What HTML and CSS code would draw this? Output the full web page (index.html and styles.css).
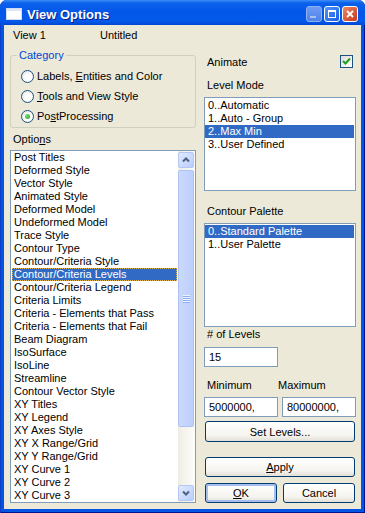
FILE: index.html
```html
<!DOCTYPE html>
<html lang="en">
<head>
    <meta charset="UTF-8">
    <meta name="viewport" content="width=device-width, initial-scale=1.0">
    <title>View Options</title>
    <link rel="stylesheet" href="styles.css">
</head>
<body>
<div class="window">
    <div class="titlebar">
        <svg class="app-icon" width="16" height="12" viewBox="0 0 16 12">
            <rect x="0.5" y="0.5" width="15" height="11" fill="#fff" stroke="#cfdcf5"/>
            <rect x="1" y="1" width="14" height="2" fill="#dfe7f7"/>
        </svg>
        <span class="title">View Options</span>
        <div class="caption-buttons">
            <span class="cap-btn cap-min">
                <svg width="14" height="14" viewBox="0 0 14 14"><rect x="3" y="9" width="6" height="2" fill="#a9c2f2"/></svg>
            </span>
            <span class="cap-btn cap-max">
                <svg width="14" height="14" viewBox="0 0 14 14"><rect x="3.5" y="3.5" width="7" height="7" fill="none" stroke="#fff"/><rect x="3" y="3" width="8" height="2" fill="#fff"/></svg>
            </span>
            <span class="cap-btn cap-close">
                <svg width="14" height="14" viewBox="0 0 14 14"><path d="M4 4 L10 10 M10 4 L4 10" stroke="#fff" stroke-width="1.8"/></svg>
            </span>
        </div>
    </div>

    <div class="client">
        <div class="view-row">
            <span class="view-name">View 1</span>
            <span>Untitled</span>
        </div>

        <div class="columns">
            <div class="left-col">
                <fieldset class="group">
                    <legend>Category</legend>
                    <div class="radio-row"><span class="radio"></span><span>Labels, <u>E</u>ntities and Color</span></div>
                    <div class="radio-row"><span class="radio"></span><span><u>T</u>ools and View Style</span></div>
                    <div class="radio-row"><span class="radio checked"></span><span>Po<u>s</u>tProcessing</span></div>
                </fieldset>

                <div class="label options-label">Optio<u>n</u>s</div>
                <div class="listbox options-list">
                    <ul class="items">
                        <li>Post Titles</li>
                        <li>Deformed Style</li>
                        <li>Vector Style</li>
                        <li>Animated Style</li>
                        <li>Deformed Model</li>
                        <li>Undeformed Model</li>
                        <li>Trace Style</li>
                        <li>Contour Type</li>
                        <li>Contour/Criteria Style</li>
                        <li class="selected">Contour/Criteria Levels</li>
                        <li>Contour/Criteria Legend</li>
                        <li>Criteria Limits</li>
                        <li>Criteria - Elements that Pass</li>
                        <li>Criteria - Elements that Fail</li>
                        <li>Beam Diagram</li>
                        <li>IsoSurface</li>
                        <li>IsoLine</li>
                        <li>Streamline</li>
                        <li>Contour Vector Style</li>
                        <li>XY Titles</li>
                        <li>XY Legend</li>
                        <li>XY Axes Style</li>
                        <li>XY X Range/Grid</li>
                        <li>XY Y Range/Grid</li>
                        <li>XY Curve 1</li>
                        <li>XY Curve 2</li>
                        <li>XY Curve 3</li>
                    </ul>
                    <div class="scrollbar">
                        <div class="scroll-btn">
                            <svg width="14" height="14" viewBox="0 0 14 14"><polyline points="4,8.5 7,5.5 10,8.5" fill="none" stroke="#4d6185" stroke-width="2"/></svg>
                        </div>
                        <div class="scroll-thumb">
                            <svg width="7" height="8" viewBox="0 0 7 8">
                                <rect x="0" y="0" width="7" height="1" fill="#eef4fe"/><rect x="0" y="1" width="7" height="1" fill="#8fb0ee"/>
                                <rect x="0" y="2" width="7" height="1" fill="#eef4fe"/><rect x="0" y="3" width="7" height="1" fill="#8fb0ee"/>
                                <rect x="0" y="4" width="7" height="1" fill="#eef4fe"/><rect x="0" y="5" width="7" height="1" fill="#8fb0ee"/>
                                <rect x="0" y="6" width="7" height="1" fill="#eef4fe"/><rect x="0" y="7" width="7" height="1" fill="#8fb0ee"/>
                            </svg>
                        </div>
                        <div class="scroll-track"></div>
                        <div class="scroll-btn">
                            <svg width="14" height="14" viewBox="0 0 14 14"><polyline points="4,5.5 7,8.5 10,5.5" fill="none" stroke="#4d6185" stroke-width="2"/></svg>
                        </div>
                    </div>
                </div>
            </div>

            <div class="right-col">
                <div class="animate-row">
                    <span>Animate</span>
                    <span class="checkbox">
                        <svg width="11" height="11" viewBox="0 0 11 11"><polyline points="2,5 4.5,7.5 9,2.5" fill="none" stroke="#21a121" stroke-width="2"/></svg>
                    </span>
                </div>

                <div class="label level-label">Level Mode</div>
                <div class="listbox level-list">
                    <ul class="items">
                        <li>0..Automatic</li>
                        <li>1..Auto - Group</li>
                        <li class="selected">2..Max Min</li>
                        <li>3..User Defined</li>
                    </ul>
                </div>

                <div class="label palette-label">Contour Palette</div>
                <div class="listbox palette-list">
                    <ul class="items">
                        <li class="selected">0..Standard Palette</li>
                        <li>1..User Palette</li>
                    </ul>
                </div>

                <div class="label count-label"># of Levels</div>
                <div class="textbox count-box">15</div>

                <div class="range-labels">
                    <span class="min-label">Minimum</span>
                    <span>Maximum</span>
                </div>
                <div class="range-boxes">
                    <div class="textbox">5000000,</div>
                    <div class="textbox">80000000,</div>
                </div>

                <button class="btn set-btn">Set Levels...</button>
                <button class="btn apply-btn"><u>A</u>pply</button>
                <div class="dialog-buttons">
                    <button class="btn default-btn"><u>O</u>K</button>
                    <button class="btn">Cancel</button>
                </div>
            </div>
        </div>
    </div>
</div>
</body>
</html>
```

FILE: styles.css
```css
body {
    margin: 0;
    background: #fff;
    font-family: "Liberation Sans", Arial, sans-serif;
    font-size: 11px;
    color: #000;
}
.window {
    width: 365px;
    height: 513px;
    display: flex;
    flex-direction: column;
    background: #0055e5;
    border-radius: 7px 7px 0 0;
    overflow: hidden;
    box-shadow: inset 1px 0 #0b3fc8, inset -1px 0 #00138c, inset 0 -1px #00138c;
}
.titlebar {
    height: 25px;
    box-sizing: border-box;
    padding: 3px 7px 0 6px;
    display: flex;
    align-items: center;
    background: linear-gradient(#3d8ef7 0%, #0b61ec 12%, #0257e8 50%, #0359ea 85%, #0346d2 100%);
}
.app-icon {
    margin-right: 5px;
}
.title {
    flex: 1;
    color: #fff;
    font-weight: bold;
    font-size: 13px;
    text-shadow: 1px 1px #0f1c89;
}
.caption-buttons {
    display: flex;
    gap: 2px;
}
.cap-btn {
    width: 16px;
    height: 16px;
    box-sizing: border-box;
    border: 1px solid #fff;
    border-radius: 3px;
    display: flex;
    align-items: center;
    justify-content: center;
}
.cap-min {
    border-color: #8fb0f2;
    background: linear-gradient(#6e9bf2, #4f83ea);
}
.cap-max {
    background: linear-gradient(to bottom right, #4f96fb, #1a5fe4);
}
.cap-close {
    background: linear-gradient(to bottom right, #ec8766, #c8391a);
}
.client {
    flex: 1;
    margin: 0 4px 4px;
    padding: 4px 5px 6px 6px;
    background: #ece9d8;
}
.view-row {
    height: 13px;
    line-height: 13px;
    padding-left: 3px;
}
.view-name {
    display: inline-block;
    width: 84px;
}
.columns {
    display: flex;
    gap: 8px;
    margin-top: 2px;
}
.left-col {
    width: 186px;
}
.right-col {
    width: 152px;
    display: flex;
    flex-direction: column;
}
.group {
    margin: 5px 0 0;
    padding: 4px 0 1px;
    border: 1px solid #d0d0bf;
    border-radius: 3px;
}
.group legend {
    margin-left: 6px;
    padding: 0 2px;
    line-height: 13px;
    color: #0046d5;
}
.radio-row {
    height: 20px;
    display: flex;
    align-items: center;
    padding-left: 10px;
}
.radio {
    width: 13px;
    height: 13px;
    box-sizing: border-box;
    margin-right: 3px;
    border: 1px solid #1c5180;
    border-radius: 50%;
    background: radial-gradient(circle at 60% 60%, #fff 35%, #dcd9d0 100%);
    display: flex;
    align-items: center;
    justify-content: center;
}
.radio.checked::after {
    content: "";
    width: 5px;
    height: 5px;
    border-radius: 50%;
    background: radial-gradient(circle at 35% 35%, #76e06f, #21a121);
}
.label {
    line-height: 13px;
    height: 13px;
    padding-left: 3px;
}
.options-label {
    margin-top: 5px;
}
.listbox {
    box-sizing: border-box;
    border: 1px solid #7f9db9;
    background: #fff;
    overflow: hidden;
}
.items {
    list-style: none;
    margin: 0;
    padding: 0;
}
.items li {
    height: 13px;
    line-height: 13px;
    padding-left: 3px;
    white-space: nowrap;
}
.items li.selected {
    background: #316ac5;
    color: #fff;
}
.options-list {
    margin-top: 4px;
    height: 353px;
    display: flex;
}
.options-list .items {
    flex: 1;
}
.options-list .items li {
    margin: 0 1px;
    padding-left: 2px;
}
.options-list .items li.selected {
    outline: 1px dotted #e3b650;
    outline-offset: -1px;
}
.scrollbar {
    width: 17px;
    box-sizing: border-box;
    padding: 1px 1px 1px 0;
    display: flex;
    flex-direction: column;
    background: linear-gradient(to right, #eeede5, #fdfdf9);
}
.scroll-btn {
    height: 16px;
    box-sizing: border-box;
    border: 1px solid #b3c6f4;
    border-radius: 2px;
    background: linear-gradient(to bottom right, #e1eafe, #b9cdfb);
    display: flex;
    align-items: center;
    justify-content: center;
}
.scroll-thumb {
    margin-top: 2px;
    height: 257px;
    box-sizing: border-box;
    border: 1px solid #aec2f3;
    border-radius: 2px;
    background: linear-gradient(to right, #cad9fd, #bccefb);
    display: flex;
    align-items: center;
    justify-content: center;
}
.scroll-track {
    flex: 1;
}
.animate-row {
    margin-top: 11px;
    height: 13px;
    padding-left: 3px;
    display: flex;
    justify-content: space-between;
    align-items: center;
}
.checkbox {
    width: 13px;
    height: 13px;
    box-sizing: border-box;
    margin-right: 3px;
    border: 1px solid #1c5180;
    background: linear-gradient(to bottom right, #dcdcd7, #fff);
    display: flex;
    align-items: center;
    justify-content: center;
}
.level-label {
    margin-top: 11px;
}
.level-list {
    margin-top: 5px;
    height: 94px;
}
.level-list .items,
.palette-list .items {
    padding: 1px 1px 0 0;
}
.palette-label {
    margin-top: 14px;
}
.palette-list {
    margin-top: 5px;
    height: 104px;
}
.count-label {
    margin-top: 1px;
}
.textbox {
    box-sizing: border-box;
    width: 74px;
    height: 20px;
    line-height: 18px;
    padding: 0 4px;
    border: 1px solid #7f9db9;
    background: #fff;
}
.count-box {
    margin-top: 6px;
}
.range-labels {
    margin-top: 12px;
    display: flex;
    line-height: 13px;
}
.min-label {
    width: 71px;
    padding-left: 3px;
}
.range-boxes {
    margin-top: 5px;
    display: flex;
    gap: 4px;
}
.btn {
    height: 20px;
    padding: 0;
    border: 1px solid #003c74;
    border-radius: 3px;
    background: linear-gradient(#fff 0%, #f5f4ef 70%, #e3e0d6 100%);
    font-family: "Liberation Sans", Arial, sans-serif;
    font-size: 11px;
    color: #000;
}
.set-btn {
    margin: 4px 1px 0;
    height: 21px;
}
.apply-btn {
    margin: 15px 1px 0;
}
.dialog-buttons {
    margin: 6px 1px 0;
    display: flex;
    gap: 6px;
}
.dialog-buttons .btn {
    width: 72px;
}
.default-btn {
    box-shadow: inset 0 0 0 2px #a4bfee;
}
```
